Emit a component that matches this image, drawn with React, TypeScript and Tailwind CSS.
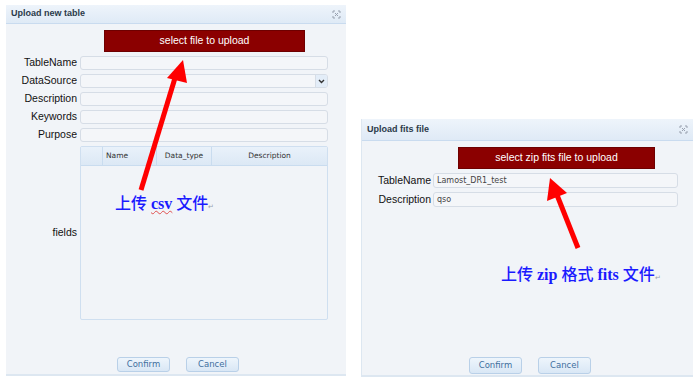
import React from 'react';

const labelFont = { fontFamily: '"Liberation Sans", Arial, sans-serif' };

function CloseIcon() {
  return (
    <svg width="9" height="9" viewBox="0 0 9 9" className="text-gray-400">
      <path d="M1 1h2M1 1v2M8 1h-2M8 1v2M1 8h2M1 8v-2M8 8h-2M8 8v-2M3 3l3 3M6 3l-3 3" stroke="currentColor" strokeWidth="1" fill="none" />
    </svg>
  );
}

function Header({ title, h }: { title: string; h: string }) {
  return (
    <div className={`${h} flex items-center justify-between px-[5px] bg-gradient-to-b from-[#eef4fb] to-[#dfeaf6] border-b border-[#c9dbef]`}>
      <span className="text-[9px] font-bold text-[#2b3a4a]" style={labelFont}>
        {title}
      </span>
      <CloseIcon />
    </div>
  );
}

function Field({ value = '', select = false, h = 'h-[14px]' }: { value?: string; select?: boolean; h?: string }) {
  return (
    <div className={`${h} flex items-center rounded-[3px] border border-[#d6dde6] bg-[#f4f6f9] overflow-hidden`}>
      <span className="flex-1 pl-[3px] text-[8px] text-[#444]" style={{ fontFamily: '"DejaVu Sans", Verdana, sans-serif' }}>
        {value}
      </span>
      {select && (
        <span className="h-full w-[12px] flex items-center justify-center border-l border-[#d6dde6] bg-[#e3edf8]">
          <svg width="7" height="5" viewBox="0 0 7 5">
            <path d="M1 1l2.5 2.5L6 1" stroke="#333" strokeWidth="1.4" fill="none" />
          </svg>
        </span>
      )}
    </div>
  );
}

function SmallButton({ label, h }: { label: string; h: string }) {
  return (
    <button
      className={`w-[53px] ${h} rounded-[3px] border border-[#b9d0e8] bg-gradient-to-b from-[#eef5fc] to-[#d9e7f5] text-[8.5px] text-[#3f6f9e]`}
      style={{ fontFamily: '"DejaVu Sans", Verdana, sans-serif' }}
    >
      {label}
    </button>
  );
}

export default function App() {
  const leftRows = ['TableName', 'DataSource', 'Description', 'Keywords', 'Purpose'];
  const noteFont = { fontFamily: '"Liberation Serif", "Noto Sans CJK SC", serif' };

  return (
    <div className="relative w-[700px] h-[381px] bg-white overflow-hidden" style={labelFont}>
      <div className="flex items-start">
        {/* Upload new table */}
        <div className="ml-[6px] mt-[5px] w-[340px] h-[371px] flex flex-col bg-[#f1f4f8] border-b-2 border-[#dde7f1]">
          <Header title="Upload new table" h="h-[19px]" />
          <button className="ml-[98px] mt-[6px] w-[201px] h-[22px] bg-[#8b0000] text-white text-[10.5px] border border-[#6e0000]">
            select file to upload
          </button>
          <div className="mt-[4px] grid grid-cols-[71px_248px] gap-x-[3px] gap-y-[4px] text-[10.5px] text-[#111]">
            {leftRows.map((r, i) => (
              <React.Fragment key={r}>
                <div className="h-[14px] flex items-center justify-end">{r}</div>
                <Field select={i === 1} />
              </React.Fragment>
            ))}
            <div className="flex items-center justify-end">fields</div>
            <div className="h-[174px] border border-[#cfdff0] rounded-[2px] flex flex-col">
              <div className="h-[19px] flex bg-gradient-to-b from-[#e9f1fa] to-[#dce8f5] border-b border-[#c9dcef] text-[7.5px] text-[#333]" style={{ fontFamily: '"DejaVu Sans", Verdana, sans-serif' }}>
                <div className="w-[22px] border-r border-[#c9dcef]" />
                <div className="w-[54px] border-r border-[#c9dcef] flex items-center pl-[3px]">Name</div>
                <div className="w-[55px] border-r border-[#c9dcef] flex items-center justify-center">Data_type</div>
                <div className="flex-1 flex items-center justify-center">Description</div>
              </div>
            </div>
          </div>
          <div className="mt-auto mb-[2px] ml-[111px] flex gap-[16px]">
            <SmallButton label="Confirm" h="h-[15px]" />
            <SmallButton label="Cancel" h="h-[15px]" />
          </div>
        </div>

        {/* Upload fits file */}
        <div className="ml-[15px] mt-[119px] w-[332px] h-[258px] flex flex-col bg-[#f1f4f8] border-l border-b-2 border-[#dde7f1]">
          <Header title="Upload fits file" h="h-[22px]" />
          <button className="ml-[96px] mt-[6px] w-[197px] h-[22px] bg-[#8b0000] text-white text-[10.5px] border border-[#6e0000]">
            select zip fits file to upload
          </button>
          <div className="mt-[4px] grid grid-cols-[69px_245px] gap-x-[2px] gap-y-[4px] text-[10.5px] text-[#111]">
            <div className="h-[15px] flex items-center justify-end">TableName</div>
            <Field value="Lamost_DR1_test" h="h-[15px]" />
            <div className="h-[15px] flex items-center justify-end">Description</div>
            <Field value="qso" h="h-[15px]" />
          </div>
          <div className="mt-auto mb-[1px] ml-[107px] flex gap-[16px]">
            <SmallButton label="Confirm" h="h-[17px]" />
            <SmallButton label="Cancel" h="h-[17px]" />
          </div>
        </div>
      </div>

      {/* annotation arrows */}
      <svg className="absolute inset-0 pointer-events-none" width="700" height="381" viewBox="0 0 700 381">
        <line x1="141" y1="190" x2="175" y2="78" stroke="#ff0000" strokeWidth="5" />
        <polygon points="183,60 167,78 187,83" fill="#ff0000" />
        <line x1="578" y1="248" x2="557" y2="195" stroke="#ff0000" strokeWidth="5" />
        <polygon points="550,178 547,201 567,193" fill="#ff0000" />
      </svg>

      <div className="absolute left-[115px] top-[192px] text-[16px] font-medium text-[#1a1aff] whitespace-nowrap" style={noteFont}>
        上传 <span className="font-bold underline decoration-wavy decoration-[#e05050] decoration-1">csv</span> 文件
        <span className="text-[7px] text-gray-400 font-normal">↵</span>
      </div>
      <div className="absolute left-[501px] top-[263px] text-[16px] font-medium text-[#1a1aff] whitespace-nowrap" style={noteFont}>
        上传 <span className="font-bold">zip</span> 格式 <span className="font-bold">fits</span> 文件
        <span className="text-[7px] text-gray-400 font-normal">↵</span>
      </div>
    </div>
  );
}
